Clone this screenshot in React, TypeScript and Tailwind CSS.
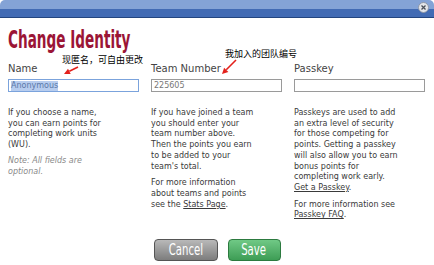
const narrow = "font-['Liberation_Sans_Narrow','DejaVu_Sans_Condensed',sans-serif]";
const body = "font-['DejaVu_Sans','Verdana',sans-serif]";
const cjk = "font-['Noto_Sans_CJK_SC',sans-serif]";

const Arrow = ({ x1, y1, x2, y2 }: { x1: number; y1: number; x2: number; y2: number }) => {
  const a = Math.atan2(y2 - y1, x2 - x1);
  const l = 6;
  const w = 3;
  const bx = x2 - l * Math.cos(a);
  const by = y2 - l * Math.sin(a);
  const px = -Math.sin(a) * w;
  const py = Math.cos(a) * w;
  return (
    <svg className="absolute left-0 top-0 pointer-events-none" width={434} height={265}>
      <line x1={x1} y1={y1} x2={bx} y2={by} stroke="#e3211c" strokeWidth={1.6} />
      <polygon points={`${x2},${y2} ${bx + px},${by + py} ${bx - px},${by - py}`} fill="#e3211c" />
    </svg>
  );
};

const Field = ({ label, value, active }: { label: string; value?: string; active?: boolean }) => (
  <div>
    <div className={`${body} text-[10px] leading-[12px] text-[#444]`}>{label}</div>
    <div
      className={`mt-[4px] h-[13px] border bg-white flex items-center px-[2px] ${body} text-[8px] text-[#777] ${
        active ? "border-[#7ba3dc]" : "border-[#9a9a9a]"
      }`}
    >
      {active ? <span className="bg-[#b7cdef] text-[#5a78a8] leading-[10px]">{value}</span> : value}
    </div>
  </div>
);

const Lines = ({ lines, className = "" }: { lines: React.ReactNode[]; className?: string }) => (
  <p className={`whitespace-nowrap ${className}`}>
    {lines.map((l, i) => (
      <span key={i} className="block">
        {l}
      </span>
    ))}
  </p>
);

export default function App() {
  return (
    <div className="relative w-[434px] h-[265px] bg-white overflow-hidden">
      {/* title bar */}
      <div className="relative flex flex-col rounded-t-[5px] overflow-hidden">
        <div className="h-[9px] bg-[#84a3d6]" />
        <div className="h-[8px] bg-[#426bb4]" />
        <div className="h-[1px] bg-[#23457f]" />
        <div className="absolute right-[5px] top-[2px] w-[11px] h-[11px] rounded-full bg-[#e4e6ea] border border-[#8e97a8] flex items-center justify-center">
          <svg width="5" height="5" viewBox="0 0 5 5">
            <path d="M0.5 0.5 L4.5 4.5 M4.5 0.5 L0.5 4.5" stroke="#4a4f58" strokeWidth="1.3" />
          </svg>
        </div>
      </div>

      <div className="px-[8px] pr-[9px]">
        <h1
          className={`${narrow} mt-[8px] text-[24px] leading-[28px] font-bold text-[#9b1536] origin-left scale-x-[0.63] whitespace-nowrap`}
        >
          Change Identity
        </h1>

        <div className={`grid grid-cols-3 gap-x-[12px] mt-[9px]`}>
          <Field label="Name" value="Anonymous" active />
          <Field label="Team Number" value="225605" />
          <Field label="Passkey" value="" />
        </div>

        <div className={`grid grid-cols-3 gap-x-[12px] mt-[16px] ${body} text-[8px] leading-[10.7px] text-[#3a3a3a]`}>
          <div className="flex flex-col gap-[5px]">
            <Lines lines={["If you choose a name,", "you can earn points for", "completing work units", "(WU)."]} />
            <Lines className="italic text-[#8a8a8a]" lines={["Note: All fields are", "optional."]} />
          </div>
          <div className="flex flex-col gap-[6px]">
            <Lines
              lines={[
                "If you have joined a team",
                "you should enter your",
                "team number above.",
                "Then the points you earn",
                "to be added to your",
                "team's total.",
              ]}
            />
            <Lines
              lines={[
                "For more information",
                "about teams and points",
                <>
                  see the <span className="underline">Stats Page</span>.
                </>,
              ]}
            />
          </div>
          <div className="flex flex-col gap-[6px]">
            <Lines
              lines={[
                "Passkeys are used to add",
                "an extra level of security",
                "for those competing for",
                "points. Getting a passkey",
                "will also allow you to earn",
                "bonus points for",
                "completing work early.",
                <>
                  <span className="underline">Get a Passkey</span>.
                </>,
              ]}
            />
            <Lines
              lines={[
                "For more information see",
                <>
                  <span className="underline">Passkey FAQ</span>.
                </>,
              ]}
            />
          </div>
        </div>
      </div>

      {/* buttons */}
      <div className="absolute left-0 right-0 top-[239px] flex justify-center gap-[10px]">
        <button
          className={`${narrow} w-[64px] h-[22px] rounded-[4px] border border-[#555] bg-gradient-to-b from-[#b9b9b9] to-[#7d7d7d] text-white text-[15px] leading-[20px] flex justify-center`}
        >
          <span className="inline-block scale-x-[0.75]">Cancel</span>
        </button>
        <button
          className={`${narrow} w-[53px] h-[22px] rounded-[4px] border border-[#2c7a3f] bg-gradient-to-b from-[#70c986] to-[#3d9d55] text-white text-[15px] leading-[20px] flex justify-center`}
        >
          <span className="inline-block scale-x-[0.75]">Save</span>
        </button>
      </div>

      {/* annotations */}
      <div className={`absolute left-[62px] top-[54px] ${cjk} text-[9px] leading-[12px] text-black whitespace-nowrap`}>
        现匿名，可自由更改
      </div>
      <div className={`absolute left-[225px] top-[48px] ${cjk} text-[9px] leading-[12px] text-black whitespace-nowrap`}>
        我加入的团队编号
      </div>
      <Arrow x1={78} y1={67} x2={64} y2={74} />
      <Arrow x1={236} y1={60} x2={222} y2={74} />
    </div>
  );
}
